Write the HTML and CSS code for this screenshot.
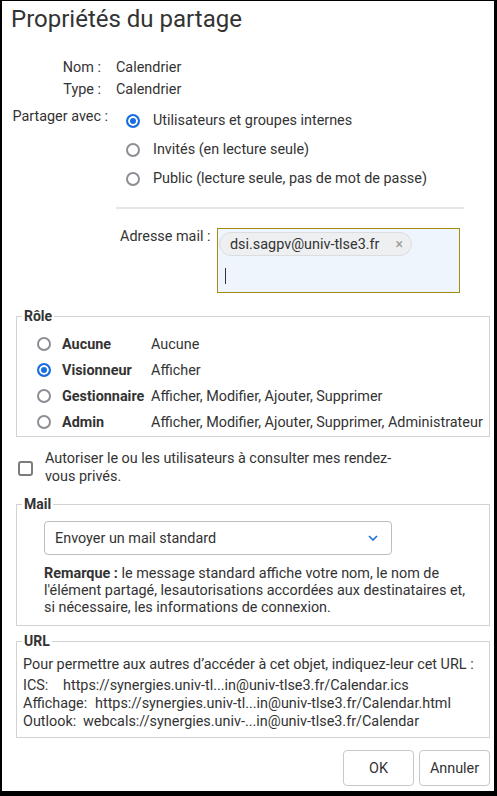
FILE: index.html
```html
<!DOCTYPE html>
<html lang="fr">
<head>
<meta charset="utf-8">
<title>Propriétés du partage</title>
<link rel="stylesheet" href="styles.css">
</head>
<body>
<div class="dialog">
  <h1 class="title">Propriétés du partage</h1>

  <div class="info">
    <div class="lbl">Nom :</div><div class="val">Calendrier</div>
    <div class="lbl">Type :</div><div class="val">Calendrier</div>
    <div class="lbl lbl-share">Partager avec :</div>
    <div class="share">
      <div class="radios">
        <div class="radio-row"><span class="radio on"></span>Utilisateurs et groupes internes</div>
        <div class="radio-row"><span class="radio"></span>Invités (en lecture seule)</div>
        <div class="radio-row"><span class="radio"></span>Public (lecture seule, pas de mot de passe)</div>
      </div>
      <div class="sep"></div>
      <div class="mail-row">
        <div class="mail-lbl">Adresse mail :</div>
        <div class="mail-input">
          <span class="chip">dsi.sagpv@univ-tlse3.fr<span class="chip-x">×</span></span>
          <span class="caret"></span>
        </div>
      </div>
    </div>
  </div>

  <fieldset class="box role-box">
    <legend>Rôle</legend>
    <div class="role-list">
      <div class="role-row"><span class="radio"></span><span class="role-name">Aucune</span><span>Aucune</span></div>
      <div class="role-row"><span class="radio on"></span><span class="role-name">Visionneur</span><span>Afficher</span></div>
      <div class="role-row"><span class="radio"></span><span class="role-name">Gestionnaire</span><span>Afficher, Modifier, Ajouter, Supprimer</span></div>
      <div class="role-row"><span class="radio"></span><span class="role-name">Admin</span><span>Afficher, Modifier, Ajouter, Supprimer, Administrateur</span></div>
    </div>
  </fieldset>

  <div class="check-row">
    <span class="checkbox"></span>
    <span class="check-text">Autoriser le ou les utilisateurs à consulter mes rendez-vous privés.</span>
  </div>

  <fieldset class="box mail-box">
    <legend>Mail</legend>
    <div class="mail-content">
      <div class="select">
        <span>Envoyer un mail standard</span>
        <svg class="chev" width="10" height="6" viewBox="0 0 10 6"><polyline points="1,1 5,5 9,1" fill="none" stroke="#1f6fd6" stroke-width="1.6"/></svg>
      </div>
      <p class="note"><strong>Remarque :</strong> le message standard affiche votre nom, le nom de l'élément partagé, lesautorisations accordées aux destinataires et, si nécessaire, les informations de connexion.</p>
    </div>
  </fieldset>

  <fieldset class="box url-box">
    <legend>URL</legend>
    <div class="url-content">
      <div class="url-intro">Pour permettre aux autres d’accéder à cet objet, indiquez-leur cet URL :</div>
      <div class="url-list">
        <div><span class="url-lbl ics">ICS:</span>https://synergies.univ-tl...in@univ-tlse3.fr/Calendar.ics</div>
        <div><span class="url-lbl aff">Affichage:</span>https://synergies.univ-tl...in@univ-tlse3.fr/Calendar.html</div>
        <div><span class="url-lbl out">Outlook:</span>webcals://synergies.univ-...in@univ-tlse3.fr/Calendar</div>
      </div>
    </div>
  </fieldset>

  <div class="actions">
    <button class="btn">OK</button>
    <button class="btn">Annuler</button>
  </div>
</div>
</body>
</html>
```

FILE: styles.css
```css
* { box-sizing: border-box; }
html, body { margin: 0; padding: 0; background: #000; }
body { font-family: Roboto, "Liberation Sans", sans-serif; font-size: 14.4px; color: #333; }

.dialog {
  margin: 1px 3px 0 2px;
  width: 492px;
  height: 790px;
  background: #fff;
  padding-top: 4px;
  overflow: hidden;
}

.title {
  margin: 0 0 0 9px;
  font-size: 24px;
  font-weight: 400;
  line-height: 28px;
  color: #333;
}

.info {
  display: grid;
  grid-template-columns: 106px 1fr;
  column-gap: 8px;
  margin-top: 24px;
}
.lbl { text-align: right; line-height: 22px; padding-right: 7px; }
.lbl-share { padding-right: 0; padding-top: 5px; }
.val { line-height: 22px; }

.radios { padding-top: 5px; }
.radio-row { display: flex; align-items: center; height: 29px; padding-left: 10px; }
.radio {
  width: 14px; height: 14px;
  border: 2px solid #8d8d95;
  border-radius: 50%;
  margin-right: 13px;
  flex: none;
  background: #fff;
}
.radio.on { border-color: #1a6fe0; background: #1a6fe0; box-shadow: inset 0 0 0 2px #fff; }

.sep { width: 348px; height: 2px; background: #e6e6e6; margin-top: 14px; }

.mail-row { display: flex; margin-top: 19px; }
.mail-lbl { width: 101px; padding-left: 4px; line-height: 18px; }
.mail-input {
  width: 243px; height: 65px;
  border: 1px solid #a38b14;
  background: #eef5fd;
  padding: 3px 1px;
  display: flex; flex-direction: column; align-items: flex-start;
}
.chip {
  display: inline-flex; align-items: center;
  height: 24px;
  border: 1px solid #dcdde0;
  background: #eeeff1;
  border-radius: 12px;
  padding: 0 8px 0 10px;
}
.chip-x { margin-left: 16px; color: #999; font-size: 14px; }
.caret { display: block; width: 1px; height: 16px; background: #333; margin: 12px 0 0 6px; }

.box {
  margin: 15px 4px 0 14px;
  padding: 0;
  border: 1px solid #d2d2d2;
  min-width: 0;
}
.box legend { margin-left: 5px; padding: 0 2px; font-weight: 700; line-height: 16px; font-size: 14px; }

.role-list { padding: 7px 0 1px 20px; }
.role-row { display: flex; align-items: center; height: 26px; }
.role-row .radio { margin-right: 11px; }
.role-name { width: 89px; font-weight: 700; flex: none; }

.check-row { display: flex; align-items: center; margin: 13px 0 0 16px; }
.checkbox { width: 15px; height: 15px; border: 2px solid #7c7c7c; border-radius: 3px; margin-right: 12px; flex: none; }
.check-text { width: 360px; line-height: 18px; }

.mail-box { margin-top: 10px; }
.mail-content { padding: 9px 0 9px 27px; }
.select {
  width: 348px; height: 34px;
  border: 1px solid #bdbdbd;
  border-radius: 4px;
  display: flex; align-items: center; justify-content: space-between;
  padding: 0 13px 0 10px;
}
.note { margin: 10px 0 0; width: 430px; line-height: 17px; }

.url-box { margin-top: 7px; }
.url-content { padding: 7px 0 6px 6px; }
.url-intro { line-height: 18px; }
.url-list { margin-top: 3px; line-height: 18px; }
.url-lbl { display: inline-block; }
.url-lbl.ics { width: 40px; }
.url-lbl.aff { width: 72px; }
.url-lbl.out { width: 60px; }

.actions { display: flex; justify-content: flex-end; gap: 5px; margin: 12px 4px 0 0; }
.btn {
  width: 71px; height: 36px;
  border: 1px solid #c8c8c8;
  border-radius: 4px;
  background: #fff;
  font: inherit;
  color: #333;
  padding: 0;
}
```
